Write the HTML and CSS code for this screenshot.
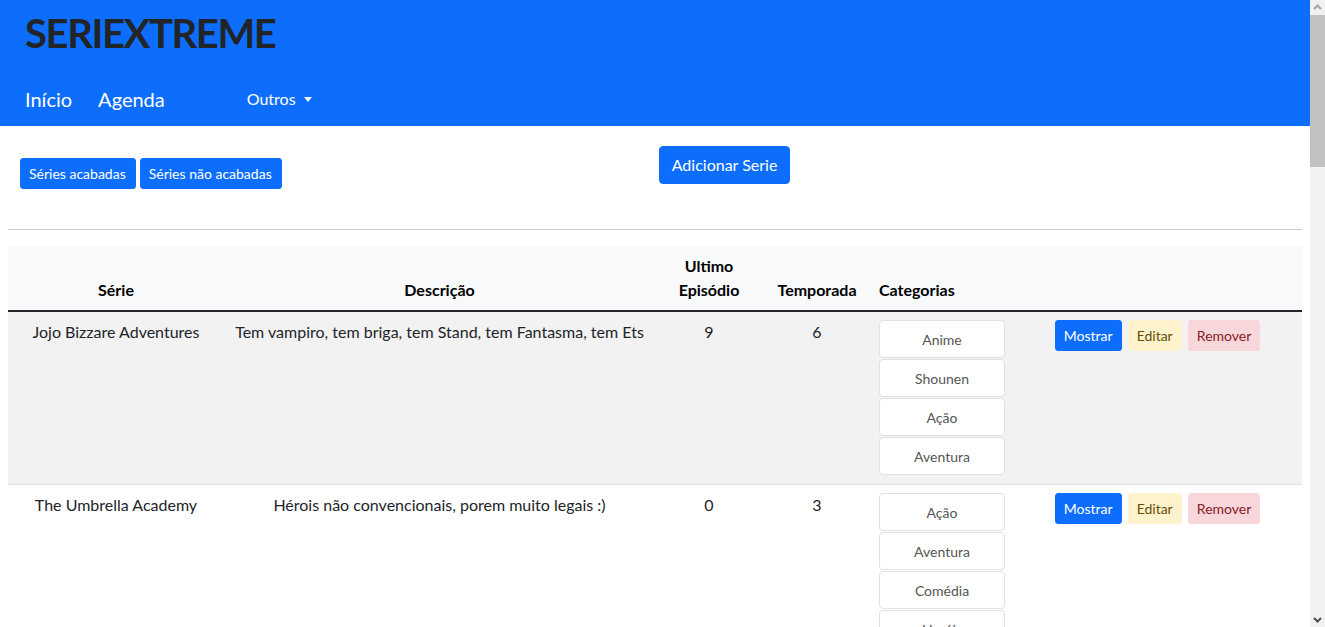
FILE: index.html
```html
<!DOCTYPE html>
<html lang="pt-BR">
<head>
<meta charset="utf-8">
<title>SERIEXTREME</title>
<link rel="stylesheet" href="styles.css">
</head>
<body>
<div class="page">
<header class="navbar">
  <h1 class="brand">SERIEXTREME</h1>
  <nav class="nav">
    <a class="nav-link big" href="#">Início</a>
    <a class="nav-link big" href="#">Agenda</a>
    <a class="nav-link dropdown" href="#">Outros <span class="caret"></span></a>
  </nav>
</header>
<main class="content">
  <div class="toolbar">
    <div class="filters">
      <button class="btn btn-primary btn-sm">Séries acabadas</button>
      <button class="btn btn-primary btn-sm">Séries não acabadas</button>
    </div>
    <button class="btn btn-primary add">Adicionar Serie</button>
  </div>
  <hr class="divider">
  <table class="table">
    <colgroup>
      <col class="c-serie"><col class="c-desc"><col class="c-ep"><col class="c-temp"><col class="c-cat"><col>
    </colgroup>
    <thead>
      <tr>
        <th>Série</th>
        <th>Descrição</th>
        <th>Ultimo Episódio</th>
        <th>Temporada</th>
        <th class="left">Categorias</th>
        <th></th>
      </tr>
    </thead>
    <tbody>
      <tr class="striped">
        <td>Jojo Bizzare Adventures</td>
        <td>Tem vampiro, tem briga, tem Stand, tem Fantasma, tem Ets</td>
        <td>9</td>
        <td>6</td>
        <td class="left">
          <button class="cat">Anime</button>
          <button class="cat">Shounen</button>
          <button class="cat">Ação</button>
          <button class="cat">Aventura</button>
        </td>
        <td class="actions">
          <button class="btn btn-primary btn-sm">Mostrar</button>
          <button class="btn btn-warning btn-sm">Editar</button>
          <button class="btn btn-danger btn-sm">Remover</button>
        </td>
      </tr>
      <tr>
        <td>The Umbrella Academy</td>
        <td>Hérois não convencionais, porem muito legais :)</td>
        <td>0</td>
        <td>3</td>
        <td class="left">
          <button class="cat">Ação</button>
          <button class="cat">Aventura</button>
          <button class="cat">Comédia</button>
          <button class="cat">Heróis</button>
        </td>
        <td class="actions">
          <button class="btn btn-primary btn-sm">Mostrar</button>
          <button class="btn btn-warning btn-sm">Editar</button>
          <button class="btn btn-danger btn-sm">Remover</button>
        </td>
      </tr>
    </tbody>
  </table>
</main>
</div>
<div class="scrollbar" aria-hidden="true">
  <div class="sb-btn">
    <svg width="15" height="15" viewBox="0 0 15 15"><path d="M4 9 L7.5 5.5 L11 9" fill="none" stroke="#a3a3a3" stroke-width="2"/></svg>
  </div>
  <div class="sb-thumb"></div>
  <div class="sb-track"></div>
  <div class="sb-btn">
    <svg width="15" height="15" viewBox="0 0 15 15"><path d="M4 6 L7.5 9.5 L11 6" fill="none" stroke="#505050" stroke-width="2"/></svg>
  </div>
</div>
</body>
</html>
```
FILE: styles.css
```css
html, body { height: 100%; }
body {
  margin: 0;
  display: flex;
  overflow: hidden;
  font-family: Lato, "Liberation Sans", sans-serif;
  font-size: 16px;
  line-height: 1.5;
  color: #212529;
  background: #fff;
}
.page {
  flex: 1;
  min-width: 0;
  height: 100%;
  overflow: hidden;
}
.scrollbar {
  width: 15px;
  flex: none;
  height: 100%;
  background: #f1f1f1;
  display: flex;
  flex-direction: column;
}
.sb-btn { height: 15px; flex: none; }
.sb-btn svg { display: block; }
.sb-thumb { height: 152px; flex: none; background: #c1c1c1; }
.sb-track { flex: 1; }
.navbar {
  background: #0d6efd;
  height: 126px;
  box-sizing: border-box;
  padding: 9px 25px 0;
}
.brand {
  margin: 0;
  font-size: 40px;
  line-height: 48px;
  font-weight: 700;
  letter-spacing: -1.4px;
  color: #212529;
}
.nav {
  display: flex;
  align-items: center;
  margin-top: 27px;
  height: 30px;
}
.nav-link {
  color: #fff;
  text-decoration: none;
}
.nav-link.big {
  font-size: 20px;
  margin-right: 26px;
}
.nav-link.dropdown {
  font-size: 16px;
  margin-left: 56px;
}
.caret {
  display: inline-block;
  margin-left: 4px;
  vertical-align: 3px;
  border-top: 5px solid #fff;
  border-left: 4px solid transparent;
  border-right: 4px solid transparent;
}
.content {
  padding: 0 8px;
}
.toolbar {
  display: flex;
  align-items: flex-start;
}
.filters {
  margin-top: 32px;
  margin-left: 12px;
  display: flex;
  gap: 4px;
}
.btn {
  font-family: inherit;
  border: 1px solid transparent;
  border-radius: 4px;
  font-size: 16px;
  line-height: 24px;
  padding: 6px 12px;
  cursor: pointer;
}
.btn-sm {
  font-size: 14px;
  line-height: 21px;
  padding: 4px 8px;
  border-radius: 3px;
}
.filters .btn-sm { padding-right: 9px; }
.btn-primary { background: #0d6efd; color: #fff; border-color: #0d6efd; }
.btn-warning { background: #fff3cd; color: #664d03; border-color: #fff3cd; }
.btn-danger { background: #f8d7da; color: #842029; border-color: #f8d7da; }
.add {
  margin-top: 20px;
  margin-left: 377px;
}
.divider {
  margin: 40px 0 16px;
  border: 0;
  border-top: 1px solid #c8c9ca;
}
.table {
  width: 100%;
  border-collapse: collapse;
  table-layout: fixed;
}
.c-serie { width: 216px; }
.c-desc { width: 431px; }
.c-ep { width: 108px; }
.c-temp { width: 108px; }
.c-cat { width: 142px; }
.table th, .table td {
  padding: 8px;
  text-align: center;
}
.table th {
  background: #f8f9fa;
  vertical-align: bottom;
  font-weight: 700;
  color: #000;
  border-bottom: 2px solid #212529;
}
.table td {
  vertical-align: top;
  border-bottom: 1px solid #dee2e6;
}
.table .left { text-align: left; }
tr.striped td { background: #f2f2f2; }
.cat {
  display: block;
  width: 126px;
  height: 38px;
  margin-bottom: 1px;
  padding: 0 8px;
  background: #fff;
  border: 1px solid #dee2e6;
  border-radius: 4px;
  font-family: inherit;
  font-size: 14px;
  color: #555;
}
.actions .btn { margin: 0 1px; }
```
